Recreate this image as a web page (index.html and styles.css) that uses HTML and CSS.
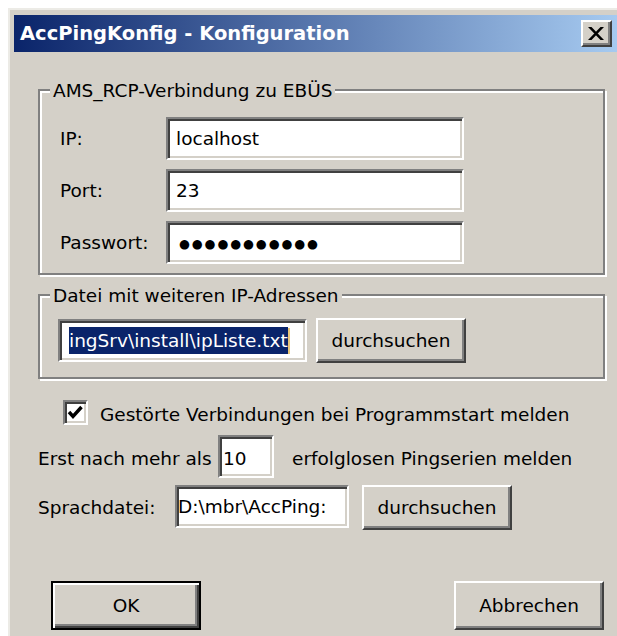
FILE: index.html
```html
<!DOCTYPE html>
<html lang="de">
<head>
<meta charset="utf-8">
<title>AccPingKonfig - Konfiguration</title>
<link rel="stylesheet" href="styles.css">
</head>
<body>
<div class="window">
  <div class="titlebar">
    <span class="title">AccPingKonfig - Konfiguration</span>
    <button class="close" type="button" aria-label="Schließen">
      <svg class="close-glyph" width="18" height="13" viewBox="0 0 18 13">
        <path d="M1 0 L4.5 0 L17 13 L13.5 13 Z M13.5 0 L17 0 L4.5 13 L1 13 Z" fill="#000"/>
      </svg>
    </button>
  </div>

  <div class="client">
    <fieldset class="group group-conn">
      <legend class="group-title">AMS_RCP-Verbindung zu EBÜS</legend>
      <div class="field-row">
        <span class="field-label">IP:</span>
        <div class="edit edit-wide">localhost</div>
      </div>
      <div class="field-row">
        <span class="field-label">Port:</span>
        <div class="edit edit-wide">23</div>
      </div>
      <div class="field-row">
        <span class="field-label">Passwort:</span>
        <div class="edit edit-wide edit-secret">●●●●●●●●●●●</div>
      </div>
    </fieldset>

    <fieldset class="group group-file">
      <legend class="group-title">Datei mit weiteren IP-Adressen</legend>
      <div class="file-row">
        <div class="edit edit-path"><span class="selection">ingSrv\install\ipListe.txt</span><span class="caret"></span></div>
        <button class="btn btn-browse" type="button">durchsuchen</button>
      </div>
    </fieldset>

    <label class="check-row">
      <span class="checkbox">
        <svg width="21" height="21" viewBox="0 0 21 21">
          <path d="M4 10 L8 14.5 L16.5 5" fill="none" stroke="#000" stroke-width="3.4" stroke-linejoin="miter"/>
        </svg>
      </span>
      <span class="check-text">Gestörte Verbindungen bei Programmstart melden</span>
    </label>

    <div class="line-row line-retry">
      <span class="line-label label-retry">Erst nach mehr als</span>
      <div class="edit edit-count">10</div>
      <span class="line-text">erfolglosen Pingserien melden</span>
    </div>

    <div class="line-row line-lang">
      <span class="line-label label-lang">Sprachdatei:</span>
      <div class="edit edit-lang">D:\mbr\AccPing:</div>
      <button class="btn btn-browse btn-lang" type="button">durchsuchen</button>
    </div>

    <div class="dialog-buttons">
      <button class="btn btn-dialog btn-default" type="button">OK</button>
      <button class="btn btn-dialog" type="button">Abbrechen</button>
    </div>
  </div>
</div>
</body>
</html>
```

FILE: styles.css
```css
* {
  box-sizing: border-box;
}

html,
body {
  margin: 0;
  padding: 0;
}

body {
  background: #ffffff;
  font-family: "DejaVu Sans", Verdana, sans-serif;
  font-size: 18.5px;
  color: #000000;
}

/* dialog frame */
.window {
  margin: 8px 0 0 8px;
  height: 628px;
  background: #d4d0c8;
  border-top: 2px solid #ecebe6;
  border-left: 2px solid #ecebe6;
  padding: 5px 0 0 4px;
  display: flex;
  flex-direction: column;
  overflow: hidden;
}

.titlebar {
  height: 37px;
  flex: none;
  display: flex;
  align-items: center;
  justify-content: space-between;
  padding: 0 5px 0 6px;
  background: linear-gradient(to right, #0a246a, #a6caf0);
}

.title {
  color: #ffffff;
  font-weight: bold;
  font-size: 19.5px;
  white-space: nowrap;
}

.close {
  width: 31px;
  height: 27px;
  padding: 0 2px 0 0;
  margin: 0;
  background: #d4d0c8;
  border: 2px solid;
  border-color: #ffffff #404040 #404040 #ffffff;
  box-shadow: inset -2px -2px 0 #808080;
  display: flex;
  align-items: center;
  justify-content: center;
}

.close-glyph {
  display: block;
}

/* client area */
.client {
  flex: 1;
  padding: 0 12px 0 24px;
}

.group {
  margin: 0;
  padding: 16px 0 9px 10px;
  border: 2px solid #808080;
  box-shadow: inset 2px 2px 0 #ffffff, 2px 2px 0 #ffffff;
  min-width: 0;
}

.group-conn {
  margin-top: 27px;
}

.group-file {
  margin-top: 9px;
  padding-top: 12px;
  padding-bottom: 14px;
}

.group-title {
  padding: 2px 3px 0;
  line-height: 20px;
  background: #d4d0c8;
}

.field-row {
  display: flex;
  align-items: center;
  margin-left: 10px;
}

.field-row + .field-row {
  margin-top: 9px;
}

.field-label {
  width: 106px;
  flex: none;
}

/* sunken edit box */
.edit {
  height: 43px;
  flex: none;
  background: #ffffff;
  border: 2px solid;
  border-color: #808080 #ffffff #ffffff #808080;
  box-shadow: inset 2px 2px 0 #404040, inset -2px -2px 0 #d4d0c8;
  display: flex;
  align-items: center;
  padding: 0 8px;
  white-space: nowrap;
  overflow: hidden;
}

.edit-wide {
  width: 298px;
}

.edit-secret {
  padding-left: 11px;
  padding-top: 2px;
  letter-spacing: 1.9px;
  font-size: 12.5px;
}

.file-row {
  display: flex;
  align-items: center;
  margin-left: 8px;
}

.edit-path {
  width: 249px;
  padding-left: 9px;
}

.selection {
  background: #0a246a;
  color: #ffffff;
  padding: 3px 0;
}

.caret {
  width: 2px;
  height: 26px;
  background: #e8c67a;
  flex: none;
}

/* raised push button */
.btn {
  width: 150px;
  height: 45px;
  margin: 0;
  padding: 0;
  font: inherit;
  color: #000000;
  background: #d4d0c8;
  border: 2px solid;
  border-color: #ffffff #404040 #404040 #ffffff;
  box-shadow: inset -2px -2px 0 #808080;
}

.btn-browse {
  margin-left: 9px;
}

.check-row {
  display: flex;
  align-items: center;
  margin-top: 21px;
}

.checkbox {
  width: 25px;
  height: 25px;
  margin-left: 25px;
  flex: none;
  background: #ffffff;
  border: 2px solid;
  border-color: #808080 #ffffff #ffffff #808080;
  box-shadow: inset 2px 2px 0 #404040, inset -2px -2px 0 #d4d0c8;
}

.checkbox svg {
  display: block;
}

.check-text {
  margin-left: 12px;
  padding-top: 3px;
}

.line-row {
  display: flex;
  align-items: center;
}

.line-retry {
  margin-top: 10px;
}

.line-retry .line-label,
.line-retry .line-text,
.edit-count {
  padding-top: 4px;
}

.line-label {
  flex: none;
  white-space: nowrap;
}

.label-retry {
  width: 180px;
}

.edit-count {
  width: 56px;
  padding-left: 3px;
}

.line-text {
  margin-left: 18px;
  white-space: nowrap;
}

.line-lang {
  margin-top: 7px;
  align-items: flex-start;
}

.label-lang {
  width: 137px;
  align-self: center;
}

.edit-lang {
  width: 174px;
  padding-left: 1px;
}

.btn-lang {
  margin-left: 13px;
}

.dialog-buttons {
  display: flex;
  justify-content: space-between;
  margin-top: 51px;
  padding: 0 1px 0 13px;
}

.btn-dialog {
  height: 49px;
  width: 150px;
}

.btn-default {
  border-color: #000000;
  box-shadow: inset 2px 2px 0 #ffffff, inset -2px -2px 0 #404040, inset -4px -4px 0 #808080;
}
```
